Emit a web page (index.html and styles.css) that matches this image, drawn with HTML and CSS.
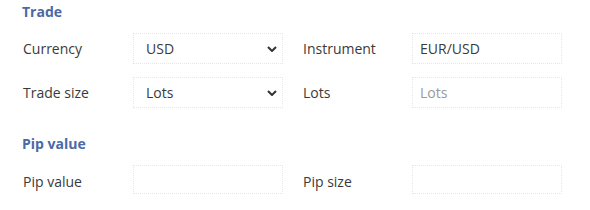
FILE: index.html
```html
<!DOCTYPE html>
<html>
<head>
<meta charset="utf-8">
<link rel="stylesheet" href="styles.css">
</head>
<body>
<div class="page">
  <h3 class="section-title first">Trade</h3>
  <div class="form-grid">
    <div class="label">Currency</div>
    <div class="field select"><span class="value">USD</span>
      <svg class="chev" width="10" height="6" viewBox="0 0 10 6"><polyline points="1,1 5,5 9,1" fill="none" stroke="#333" stroke-width="2"/></svg>
    </div>
    <div class="spacer"></div>
    <div class="label">Instrument</div>
    <div class="field input"><span class="value">EUR/USD</span></div>

    <div class="label">Trade size</div>
    <div class="field select"><span class="value">Lots</span>
      <svg class="chev" width="10" height="6" viewBox="0 0 10 6"><polyline points="1,1 5,5 9,1" fill="none" stroke="#333" stroke-width="2"/></svg>
    </div>
    <div class="spacer"></div>
    <div class="label">Lots</div>
    <div class="field input"><span class="placeholder">Lots</span></div>
  </div>

  <h3 class="section-title second">Pip value</h3>
  <div class="form-grid single">
    <div class="label">Pip value</div>
    <div class="field input"></div>
    <div class="spacer"></div>
    <div class="label">Pip size</div>
    <div class="field input"></div>
  </div>
</div>
</body>
</html>
```
FILE: styles.css
```css
html, body {
  margin: 0;
  padding: 0;
  background: #ffffff;
}
body {
  font-family: "Open Sans", "Liberation Sans", sans-serif;
  font-size: 14px;
  color: #3a3a3a;
}
.page {
  padding-left: 22px;
  padding-top: 2px;
}
.section-title {
  margin: 0;
  font-size: 14px;
  font-weight: 700;
  line-height: 20px;
  color: #4a6aa6;
}
.section-title.second {
  margin-top: 26px;
}
.form-grid {
  display: grid;
  grid-template-columns: 111px 150px 19px 110px 150px;
  grid-auto-rows: 31px;
  row-gap: 13px;
  margin-top: 11px;
  align-items: center;
}
.form-grid.single {
  margin-top: 11px;
  grid-auto-rows: 29px;
}
.label {
  padding-left: 1px;
  line-height: 20px;
}
.form-grid.single .label {
  padding-top: 4px;
}
.field {
  height: 100%;
  box-sizing: border-box;
  border: 1px dotted #e6e6e6;
  display: flex;
  align-items: center;
}
.field.select {
  padding-left: 12px;
  padding-right: 5px;
  justify-content: space-between;
}
.field.input {
  padding-left: 7px;
}
.value {
  color: #3a3a3a;
}
.placeholder {
  color: #9a9a9a;
}
.chev {
  display: block;
}
```
